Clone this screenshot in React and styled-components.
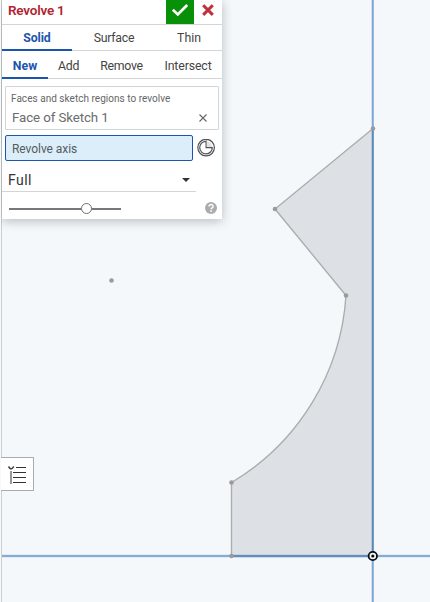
import React from "react";
import styled, { createGlobalStyle } from "styled-components";

const GlobalStyle = createGlobalStyle`
  *, *::before, *::after { box-sizing: border-box; }
  body { margin: 0; overflow: hidden; font-family: Roboto, "Noto Sans", sans-serif; }
`;

const Workspace = styled.main`
  position: relative;
  width: 430px;
  height: 602px;
  overflow: hidden;
  background: #f4f8fb;
  border-left: 1px solid #f7f9fa;
`;

const Sketch = styled.svg`
  position: absolute;
  top: 0;
  left: -1px;
  display: block;
`;

const Panel = styled.section`
  position: absolute;
  top: 0;
  left: 1px;
  width: 220px;
  height: 219px;
  background: #fff;
  box-shadow: 0 2px 10px rgba(50, 60, 70, 0.32);
`;

const Header = styled.header`
  display: flex;
  height: 25px;
  padding-left: 6px;
  border-bottom: 1px solid #d2d4d5;
`;

const Title = styled.h1`
  flex: 1;
  margin: 0;
  font-size: 13.5px;
  line-height: 21px;
  font-weight: 600;
  letter-spacing: -0.22px;
  color: #b0242f;
  white-space: nowrap;
`;

const HeaderButton = styled.button`
  display: flex;
  justify-content: center;
  width: 28px;
  height: 24px;
  padding: 0;
  border: 0;
  background: ${(p) => (p.$accept ? "#079008" : "transparent")};
`;

const Tabs = styled.nav`
  display: grid;
  grid-template-columns: ${(p) => p.$columns};
  height: ${(p) => p.$height}px;
  border-bottom: 1px solid #d2d4d5;
`;

const Tab = styled.button`
  display: flex;
  align-items: flex-end;
  justify-content: center;
  height: ${(p) => p.$height}px;
  padding: 0 0 ${(p) => (p.$active ? 0 : 2)}px;
  border: 0;
  border-bottom: ${(p) => (p.$active ? "2px solid #1b55ae" : "0")};
  background: transparent;
  font-family: inherit;
  font-size: 12.3px;
  line-height: 22px;
  font-weight: ${(p) => (p.$active ? 700 : 400)};
  letter-spacing: ${(p) => p.$spacing || 0}px;
  color: ${(p) => (p.$active ? "#1b55ae" : "#444")};
  white-space: nowrap;
`;

const Selection = styled.div`
  display: grid;
  grid-template-rows: 19px 19px;
  width: 214px;
  height: 44px;
  margin: 7px 0 0 3px;
  padding: 2px 5px 0;
  border: 1px solid #d2d5d5;
  border-radius: 1px;
`;

const FieldLabel = styled.span`
  font-size: 10px;
  line-height: 19px;
  letter-spacing: 0.03px;
  color: #666;
  white-space: nowrap;
`;

const SelectedItem = styled.div`
  display: flex;
  align-items: center;
  justify-content: space-between;
  padding: 0 5px 0 1px;
  font-size: 13.3px;
  line-height: 19px;
  letter-spacing: -0.1px;
  color: #6a6c6d;
`;

const AxisRow = styled.div`
  display: flex;
  align-items: center;
  gap: 4px;
  height: 26px;
  margin: 5px 0 0 3px;
`;

const AxisField = styled.div`
  width: 188px;
  height: 26px;
  padding: 1px 6px 0;
  border: 1px solid #1b55ae;
  border-radius: 2px;
  background: #dceefa;
  font-size: 12px;
  line-height: 24px;
  letter-spacing: -0.05px;
  color: #555b60;
`;

const Dropdown = styled.div`
  display: flex;
  align-items: center;
  justify-content: space-between;
  width: 194px;
  height: 31px;
  padding: 7px 6px 0 6px;
  border-bottom: 1px solid #d2d4d5;
  font-size: 14px;
  letter-spacing: 0.45px;
  color: #333;
`;

const Footer = styled.footer`
  display: flex;
  align-items: center;
  justify-content: space-between;
  height: 27px;
  padding: 5px 5px 0 7px;
`;

const Slider = styled.div`
  display: flex;
  align-items: center;
  justify-content: center;
  width: 112px;
  height: 13px;
  padding-left: 42px;
  background: linear-gradient(#777, #777) left 6px / 100% 2px no-repeat;
`;

const Thumb = styled.span`
  width: 11px;
  height: 11px;
  border: 1px solid #707070;
  border-radius: 50%;
  background: #fff;
`;

const ListButton = styled.button`
  position: absolute;
  top: 457px;
  left: 0;
  width: 33px;
  height: 34px;
  padding: 0;
  border: 1px solid #a9abac;
  border-left: 0;
  background: #fff;
`;

const Icon = styled.svg`
  display: block;
  flex: none;
`;

const POINTS = [[373, 128.5], [275, 209], [346, 295.5], [231.5, 482.5], [231.5, 556], [111.5, 280.5]];

const REGION = "M373 128.5L275 209L346 295.5A235 235 0 0 1 231.5 482.5V556H373Z";

function SketchCanvas() {
  return (
    <Sketch width="430" height="602" viewBox="0 0 430 602">
      <path d="M1.5 0V602" stroke="#cbcfd0" />
      <path d="M372.75 0V602M2 556H430" stroke="#a9c7e7" strokeWidth="2.4" />
      <path d="M372.75 0V602M2 556H430" stroke="#7ba3d0" strokeWidth="1.3" />
      <path d={REGION} fill="#dde0e5" />
      <path d="M372.75 128V556H231.5" fill="none" stroke="#8caccd" strokeWidth="2.4" />
      <path d="M372.75 128V556H231.5" fill="none" stroke="#5684b5" strokeWidth="1.3" />
      <path
        d="M373 128.5L275 209L346 295.5A235 235 0 0 1 231.5 482.5V556"
        fill="none"
        stroke="#aaacae"
        strokeWidth="1.35"
      />
      {POINTS.map(([x, y]) => (
        <circle key={`${x}-${y}`} cx={x} cy={y} r="2.3" fill="#999b9d" />
      ))}
      <circle cx="372.8" cy="556" r="4.2" fill="#f4f8fb" stroke="#0b0d0f" strokeWidth="1.8" />
      <circle cx="372.8" cy="556" r="1.6" fill="#0b0d0f" />
    </Sketch>
  );
}

export default function App() {
  return (
    <Workspace>
      <GlobalStyle />
      <SketchCanvas />
      <Panel>
        <Header>
          <Title>Revolve 1</Title>
          <HeaderButton $accept aria-label="Accept">
            <Icon width="28" height="24" viewBox="0 0 28 24">
              <path d="M6.8 9.8L11.8 14.4L21.2 5" fill="none" stroke="#fff" strokeWidth="2.7" />
            </Icon>
          </HeaderButton>
          <HeaderButton aria-label="Cancel">
            <Icon width="28" height="24" viewBox="0 0 28 24">
              <path d="M9.2 5.3L18.8 14.9M18.8 5.3L9.2 14.9" fill="none" stroke="#bd303c" strokeWidth="3" />
            </Icon>
          </HeaderButton>
        </Header>
        <Tabs $columns="70px 84px 66px" $height={26}>
          <Tab $active $height={26} $spacing={-0.12}>Solid</Tab>
          <Tab $height={26} $spacing={-0.25}>Surface</Tab>
          <Tab $height={26}>Thin</Tab>
        </Tabs>
        <Tabs $columns="46px 41px 65px 68px" $height={28}>
          <Tab $active $height={28}>New</Tab>
          <Tab $height={28} $spacing={-0.25}>Add</Tab>
          <Tab $height={28} $spacing={-0.25}>Remove</Tab>
          <Tab $height={28} $spacing={-0.12}>Intersect</Tab>
        </Tabs>
        <Selection>
          <FieldLabel>Faces and sketch regions to revolve</FieldLabel>
          <SelectedItem>
            Face of Sketch 1
            <Icon width="10" height="10" viewBox="0 0 10 10">
              <path d="M1.5 1.5L8.5 8.5M8.5 1.5L1.5 8.5" stroke="#666" strokeWidth="1.1" />
            </Icon>
          </SelectedItem>
        </Selection>
        <AxisRow>
          <AxisField>Revolve axis</AxisField>
          <Icon width="19" height="19" viewBox="0.4 0.9 19 19" fill="none" stroke="#505254">
            <circle cx="9.5" cy="9.5" r="8.3" strokeWidth="1.2" />
            <path d="M9.5 3V9.5H15.7A6.3 6.3 0 1 1 9 3.2Z" fill="#fff" strokeWidth="1.2" />
            <path d="M10.2 3.4A6 6 0 0 1 15.5 8.8H10.2Z" fill="#e1e1e1" stroke="none" />
          </Icon>
        </AxisRow>
        <Dropdown>
          Full
          <Icon width="8" height="4" viewBox="0 0 8 4">
            <path d="M0 0H8L4 4Z" fill="#333" />
          </Icon>
        </Dropdown>
        <Footer>
          <Slider>
            <Thumb />
          </Slider>
          <Icon width="12" height="12" viewBox="0 0 12 12">
            <circle cx="6" cy="6" r="6" fill="#acacac" />
            <path d="M4 4.5C4 1.8 8.2 2 8.1 4.4C8 5.8 6.1 5.8 6.1 7.2" fill="none" stroke="#fff" strokeWidth="1.5" />
            <rect x="5.3" y="8.2" width="1.6" height="1.6" fill="#fff" />
          </Icon>
        </Footer>
      </Panel>
      <ListButton aria-label="Feature list">
        <Icon width="32" height="32" viewBox="0 0 32 32">
          <path d="M7.5 8.5Q9 11 10 11Q11 11 12.8 8.5" fill="none" stroke="#444" strokeWidth="1.5" />
          <path d="M10 13V26" stroke="#999" strokeWidth="2" />
          <path d="M15 9.5H25M12 14.5H25M12 19.5H25M12 24.5H25" stroke="#333" />
        </Icon>
      </ListButton>
    </Workspace>
  );
}
